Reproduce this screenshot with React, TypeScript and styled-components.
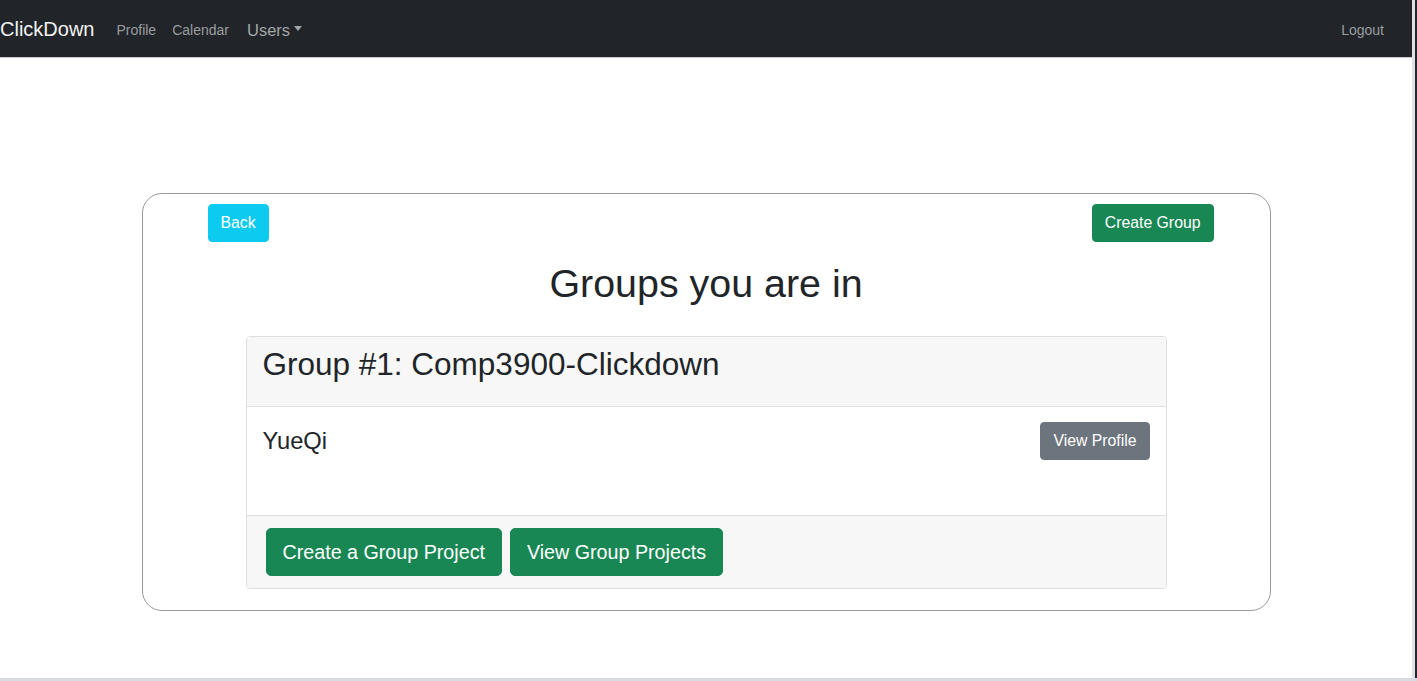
import React from "react";
import styled, { createGlobalStyle } from "styled-components";

const Global = createGlobalStyle`
  html, body { margin: 0; padding: 0; background: #ffffff; }
  body { font-family: "Liberation Sans", Arial, sans-serif; color: #212529; }
  * { box-sizing: border-box; }
`;

const Frame = styled.div`
  width: 1417px;
  height: 681px;
  display: flex;
  flex-direction: column;
  overflow: hidden;
`;

const Top = styled.div`
  flex: 1;
  display: flex;
  min-height: 0;
`;

const Main = styled.div`
  width: 1412px;
  display: flex;
  flex-direction: column;
`;

const RightEdge = styled.div`
  width: 5px;
  display: flex;
`;

const EdgeLight = styled.div`
  width: 3px;
  background: #dfe1e4;
`;

const EdgeDark = styled.div`
  width: 2px;
  background: #23272b;
`;

const BottomEdge = styled.div`
  height: 3px;
  background: #d8dbe0;
`;

const Nav = styled.nav`
  height: 58px;
  flex-shrink: 0;
  background: #212529;
  border-bottom: 1px solid #c9cbcd;
  display: flex;
  align-items: center;
  padding: 2px 20px 0 0;
`;

const Brand = styled.span`
  font-size: 20px;
  color: #f2f2f2;
  margin-right: 14px;
`;

const NavLink = styled.span<{ $big?: boolean }>`
  font-size: ${(p) => (p.$big ? "16.5px" : "14px")};
  line-height: 20px;
  color: ${(p) => (p.$big ? "#a4a6a8" : "#9a9c9e")};
  padding: 0 8px;
  margin-left: ${(p) => (p.$big ? "2px" : "0")};
  display: inline-flex;
  align-items: center;
`;

const Caret = styled.span`
  display: inline-block;
  margin-left: 4px;
  width: 0;
  height: 0;
  border-left: 4.5px solid transparent;
  border-right: 4.5px solid transparent;
  border-top: 5px solid #a4a6a8;
  margin-top: -2px;
`;

const Spacer = styled.div`
  flex: 1;
`;

const Content = styled.div`
  flex: 1;
  padding-top: 135px;
  display: flex;
  justify-content: center;
`;

const Outer = styled.div`
  width: 1129px;
  height: 418px;
  border: 1px solid #9a9a9a;
  border-radius: 20px;
  padding-top: 10px;
  display: flex;
  flex-direction: column;
  align-items: center;
`;

const TopRow = styled.div`
  width: 100%;
  padding: 0 56px 0 65px;
  display: flex;
  justify-content: space-between;
`;

const Btn = styled.button<{ $bg: string; $lg?: boolean }>`
  font-family: "Liberation Sans", Arial, sans-serif;
  background: ${(p) => p.$bg};
  color: #ffffff;
  border: 1px solid ${(p) => p.$bg};
  border-radius: ${(p) => (p.$lg ? "5px" : "4px")};
  font-size: ${(p) => (p.$lg ? "19.7px" : "15.8px")};
  line-height: ${(p) => (p.$lg ? "30px" : "24px")};
  padding: ${(p) => (p.$lg ? "8px 16px" : "6px 12px")};
  margin: ${(p) => (p.$lg ? "4px" : "0")};
  cursor: pointer;
`;

const Title = styled.h1`
  font-size: 39.4px;
  font-weight: 400;
  line-height: 48px;
  margin: 17px 0 29px;
  color: #212529;
`;

const Card = styled.div`
  width: 921px;
  border: 1px solid #dfdfdf;
  border-radius: 4px;
  display: flex;
  flex-direction: column;
  overflow: hidden;
`;

const CardHeader = styled.div`
  background: #f7f7f7;
  border-bottom: 1px solid #dfdfdf;
  padding: 8px 16px 0;
  height: 70px;
`;

const GroupTitle = styled.h2`
  font-size: 31.5px;
  font-weight: 400;
  line-height: 38px;
  margin: 0;
  color: #212529;
`;

const CardBody = styled.div`
  padding: 15px 16px 0;
  height: 108px;
`;

const MemberRow = styled.div`
  display: flex;
  justify-content: space-between;
  align-items: center;
`;

const MemberName = styled.span`
  font-size: 23.7px;
  color: #212529;
`;

const CardFooter = styled.div`
  background: #f7f7f7;
  border-top: 1px solid #dfdfdf;
  padding: 8px 15px;
  display: flex;
`;

export default function App() {
  return (
    <>
      <Global />
      <Frame>
        <Top>
          <Main>
            <Nav>
              <Brand>ClickDown</Brand>
              <NavLink>Profile</NavLink>
              <NavLink>Calendar</NavLink>
              <NavLink $big>
                Users
                <Caret />
              </NavLink>
              <Spacer />
              <NavLink>Logout</NavLink>
            </Nav>
            <Content>
              <Outer>
                <TopRow>
                  <Btn $bg="#0dcaf0">Back</Btn>
                  <Btn $bg="#198754">Create Group</Btn>
                </TopRow>
                <Title>Groups you are in</Title>
                <Card>
                  <CardHeader>
                    <GroupTitle>Group #1: Comp3900-Clickdown</GroupTitle>
                  </CardHeader>
                  <CardBody>
                    <MemberRow>
                      <MemberName>YueQi</MemberName>
                      <Btn $bg="#6c757d">View Profile</Btn>
                    </MemberRow>
                  </CardBody>
                  <CardFooter>
                    <Btn $bg="#198754" $lg>
                      Create a Group Project
                    </Btn>
                    <Btn $bg="#198754" $lg>
                      View Group Projects
                    </Btn>
                  </CardFooter>
                </Card>
              </Outer>
            </Content>
          </Main>
          <RightEdge>
            <EdgeLight />
            <EdgeDark />
          </RightEdge>
        </Top>
        <BottomEdge />
      </Frame>
    </>
  );
}
